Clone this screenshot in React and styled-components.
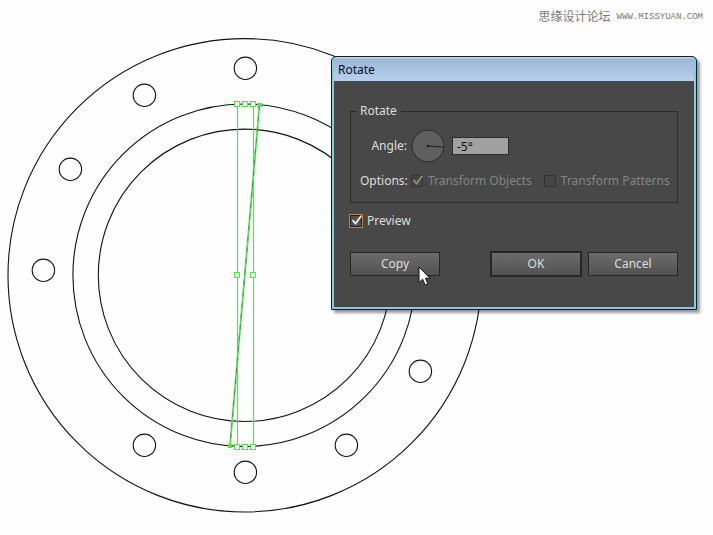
import React, { useState } from "react";
import styled, { createGlobalStyle, css } from "styled-components";

const HOLES = [
  [245, 68],
  [144, 95],
  [70, 169],
  [43, 270],
  [144, 445],
  [245, 472],
  [346, 445],
  [420, 371],
];

const HANDLES = [
  [237, 104],
  [245, 104],
  [253, 104],
  [237, 275],
  [253, 275],
  [237, 447],
  [245, 447],
  [253, 447],
];

const Flange = () => (
  <Drawing viewBox="0 0 490 535" aria-hidden="true">
    <g fill="none" stroke="#111" strokeWidth="1.1">
      <circle cx="244.7" cy="275.3" r="236.7" />
      <circle cx="244.2" cy="275.3" r="171.3" />
      <circle cx="244.5" cy="275.3" r="146.2" />
      {HOLES.map(([x, y]) => (
        <circle key={`${x}-${y}`} cx={x + 0.4} cy={y + 0.3} r="11.2" />
      ))}
    </g>
    <g stroke="#4be64b" strokeWidth="1.2">
      <line x1="237.5" y1="104" x2="237.5" y2="447" />
      <line x1="253.5" y1="104" x2="253.5" y2="447" />
    </g>
    <path d="M259.5 105L230 445.5" stroke="#4be64b" strokeWidth="1.8" />
    <path
      d="M259.5 105L230 445.5"
      stroke="#5b7a5b"
      strokeWidth="0.9"
      strokeDasharray="5 6"
    />
    <path d="M257 103h5v4h-5zM228 444h4v4h-4z" fill="#4be64b" />
    {HANDLES.map(([x, y]) => (
      <rect
        key={`${x}-${y}`}
        x={x - 2.5}
        y={y - 2.5}
        width="5"
        height="5"
        fill="#fff"
        stroke="#4be64b"
      />
    ))}
  </Drawing>
);

const CheckOption = ({ label, checked, disabled, focused, onChange }) => (
  <OptionLabel $disabled={disabled}>
    <BoxWrapper>
      <Checkbox
        type="checkbox"
        checked={checked}
        disabled={disabled}
        onChange={onChange}
        $focused={focused}
      />
      {checked && (
        <CheckMark viewBox="0 0 14 14" $disabled={disabled}>
          <path d="M3.5 6.2L6.5 9.6L12.4 1.8" />
        </CheckMark>
      )}
    </BoxWrapper>
    {label}
  </OptionLabel>
);

const App = () => {
  const [angle, setAngle] = useState("-5°");
  const [preview, setPreview] = useState(true);

  return (
    <Page>
      <GlobalStyle />
      <Watermark>
        <ForumName>思缘设计论坛</ForumName>
        <SiteName>WWW.MISSYUAN.COM</SiteName>
      </Watermark>
      <Flange />
      <Dialog role="dialog" aria-labelledby="dialog-title">
        <TitleBar id="dialog-title">Rotate</TitleBar>
        <Body>
          <Group>
            <Legend>Rotate</Legend>
            <Row>
              <RowLabel htmlFor="angle">Angle:</RowLabel>
              <Dial viewBox="0 0 34 34" aria-hidden="true">
                <circle cx="17" cy="17" r="16" fill="#5f5f5f" stroke="#2b2b2b" />
                <path d="M17 17L33 18.2" stroke="#1c1c1c" />
                <circle cx="17" cy="17" r="1.3" fill="#1c1c1c" />
              </Dial>
              <AngleInput
                id="angle"
                value={angle}
                onChange={(e) => setAngle(e.target.value)}
              />
            </Row>
            <Row>
              <RowLabel as="span">Options:</RowLabel>
              <Options>
                <CheckOption label="Transform Objects" checked disabled />
                <CheckOption label="Transform Patterns" checked={false} disabled />
              </Options>
            </Row>
          </Group>
          <CheckOption
            label="Preview"
            checked={preview}
            focused
            onChange={(e) => setPreview(e.target.checked)}
          />
          <Footer>
            <Button type="button">Copy</Button>
            <ButtonPair>
              <Button type="button" $primary>
                OK
              </Button>
              <Button type="button">Cancel</Button>
            </ButtonPair>
          </Footer>
        </Body>
      </Dialog>
      <Pointer viewBox="0 0 14 21" aria-hidden="true">
        <path d="M1 1V16.5L4.6 13.2L7.2 19L9.9 17.8L7.4 12.2H12Z" />
      </Pointer>
    </Page>
  );
};

export default App;

const GlobalStyle = createGlobalStyle`
  * {
    box-sizing: border-box;
  }

  body {
    margin: 0;
    background: #fefefe;
  }
`;

const Page = styled.div`
  position: relative;
  min-height: 100vh;
  overflow: hidden;
  font-family: "Noto Sans", "Noto Sans CJK SC", sans-serif;
  font-size: 12px;
  line-height: 16px;
`;

const Drawing = styled.svg`
  display: block;
  width: 490px;
  height: 535px;
`;

const Watermark = styled.div`
  position: absolute;
  top: 8px;
  right: 10px;
  display: flex;
  align-items: flex-end;
  gap: 6px;
  color: #777;
`;

const ForumName = styled.span`
  font-family: "Noto Sans CJK SC", sans-serif;
  font-size: 12px;
`;

const SiteName = styled.span`
  font-family: "Liberation Mono", monospace;
  font-size: 9px;
  line-height: 14px;
`;

const Dialog = styled.section`
  position: absolute;
  top: 56px;
  left: 331px;
  width: 366px;
  padding: 0 2px 2px;
  border: 1px solid #0c2029;
  border-radius: 5px 5px 0 0;
  background: #86cbe2;
  box-shadow: 3px 3px 3px rgba(0, 0, 0, 0.4);
`;

const TitleBar = styled.h1`
  margin: 0;
  height: 24px;
  padding: 0 4px;
  border-radius: 4px 4px 0 0;
  background: linear-gradient(#d5e4f2 0, #9bb7d6 2px, #b8d0ea 100%);
  color: #0b0b1e;
  font-size: 12px;
  font-weight: 400;
  line-height: 25px;
`;

const Body = styled.div`
  padding: 22px 16px 31px;
  background: #484848;
  color: #dedede;
`;

const Group = styled.fieldset`
  display: flex;
  flex-direction: column;
  gap: 10px;
  min-width: 0;
  margin: 0 0 10px;
  padding: 10px 9px 13px;
  border: 1px solid #2b2b2b;
`;

const Legend = styled.legend`
  margin-left: -4px;
  padding: 0 4px;
`;

const Row = styled.div`
  display: flex;
  align-items: center;
`;

const RowLabel = styled.label`
  width: 47px;
  margin-right: 4px;
  text-align: right;
  white-space: nowrap;
`;

const Dial = styled.svg`
  width: 34px;
  height: 34px;
  margin-right: 7px;
`;

const AngleInput = styled.input`
  width: 57px;
  height: 18px;
  padding: 0 4px;
  border: 1px solid #2b2b2b;
  background: #a0a0a0;
  color: #0c0c0c;
  font: inherit;
  outline: none;
`;

const Options = styled.div`
  display: flex;
  gap: 12px;
`;

const OptionLabel = styled.label`
  display: flex;
  align-items: center;
  gap: 5px;
  white-space: nowrap;
  color: ${(props) => (props.$disabled ? "#858585" : "#dedede")};
`;

const BoxWrapper = styled.span`
  position: relative;
  display: flex;
`;

const Checkbox = styled.input`
  appearance: none;
  width: 12px;
  height: 12px;
  margin: 0;
  border: 1px solid ${(props) => (props.disabled ? "#343434" : "#222")};
  background: ${(props) => (props.disabled ? "#454545" : "#505050")};

  ${(props) =>
    props.$focused &&
    css`
      box-shadow: 0 0 0 1px #c98536;
    `}
`;

const CheckMark = styled.svg`
  position: absolute;
  top: -1px;
  left: -1px;
  width: 14px;
  height: 14px;
  fill: none;
  stroke: ${(props) => (props.$disabled ? "#8c8c8c" : "#eee")};
  stroke-width: 1.8;
  pointer-events: none;
`;

const Footer = styled.div`
  display: flex;
  justify-content: space-between;
  margin-top: 23px;
`;

const ButtonPair = styled.div`
  display: flex;
  gap: 7px;
`;

const Button = styled.button`
  width: 90px;
  height: 24px;
  padding: 0;
  border: 1px solid #262626;
  background: linear-gradient(#6c6c6c, #525252);
  color: #dedede;
  font: inherit;

  ${(props) =>
    props.$primary &&
    css`
      box-shadow: 0 0 0 1px #262626;
    `}
`;

const Pointer = styled.svg`
  position: absolute;
  top: 266px;
  left: 418px;
  width: 14px;
  height: 21px;
  fill: #fff;
  stroke: #111;
  pointer-events: none;
`;
